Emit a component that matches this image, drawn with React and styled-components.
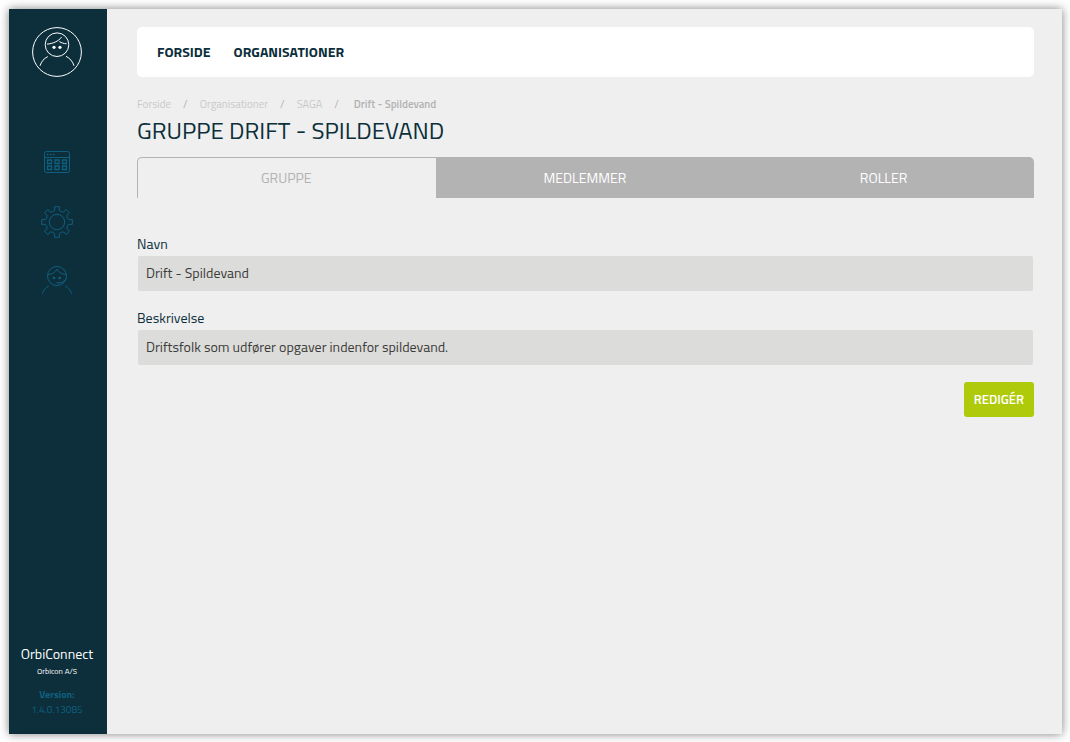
import React from "react"
import styled, { createGlobalStyle } from "styled-components"

const menuLinks = ["Forside", "Organisationer"]
const crumbs = ["Forside", "Organisationer", "SAGA"]
const tabs = ["Gruppe", "Medlemmer", "Roller"]

const gearPath = () => {
  const point = (radius, degrees) => {
    const angle = (degrees * Math.PI) / 180
    const x = 16 + radius * Math.cos(angle)
    const y = 16 + radius * Math.sin(angle)
    return `${x.toFixed(2)} ${y.toFixed(2)}`
  }
  let path = ""
  for (let a = 0; a < 360; a += 45) {
    path += `${a === 0 ? "M" : "L"}${point(12, a - 11)} L${point(15.5, a - 9)} `
    path += `L${point(15.5, a + 9)} L${point(12, a + 11)} `
    path += `Q${point(10.4, a + 22.5)} ${point(12, a + 34)} `
  }
  return path + "Z"
}

const AvatarIcon = () => (
  <Icon width="50" height="50" viewBox="0 0 50 50" aria-hidden="true">
    <circle cx="25" cy="25" r="24.4" />
    <circle cx="25" cy="17.7" r="11.8" />
    <path d="M15 17.2C20.5 16.6 26.5 14.5 29.6 10M27.3 14.6C29.5 15.8 31.5 16.6 34.6 16.8" />
    <path d="M8 38.8C9.3 34.6 11.9 31.4 15.8 29.6M34 29.3C37.9 31.2 40.7 34.5 42 38.8" />
    <Dot cx="22" cy="20.3" r="1.6" />
    <Dot cx="28" cy="20.3" r="1.6" />
  </Icon>
)

const CalendarIcon = () => (
  <Icon width="32" height="32" viewBox="0 0 32 32" aria-hidden="true">
    <rect x="3.5" y="5.5" width="25" height="21" rx="2" />
    <path d="M3.5 11.5H28.5" />
    <path d="M5.8 8.5H7.4M8.8 8.5H10.4M11.8 8.5H13.4" strokeWidth="1.6" />
    <path
      d="M6.5 14H10.5V17.5H6.5ZM14 14H18V17.5H14ZM21.5 14H25.5V17.5H21.5Z"
      strokeWidth="1.3"
    />
    <path
      d="M6.5 20H10.5V23.5H6.5ZM14 20H18V23.5H14ZM21.5 20H25.5V23.5H21.5Z"
      strokeWidth="1.3"
    />
  </Icon>
)

const GearIcon = () => (
  <Icon width="32" height="32" viewBox="0 0 32 32" aria-hidden="true">
    <circle cx="16" cy="16" r="7.7" />
    <path d={gearPath()} />
  </Icon>
)

const SupportIcon = () => (
  <Icon width="32" height="32" viewBox="0 0 32 32" aria-hidden="true">
    <circle cx="16" cy="10" r="9.5" />
    <path d="M7 8.6C11 8.2 14.5 6.4 16 3.2C17.5 6.4 21 8.2 25 8.6" />
    <path d="M25 13C23.2 15.7 20.5 16.8 17.5 16.8M15.5 16.8H18.5" />
    <path d="M1.5 27.5C2.4 24.4 4.4 21.6 7.6 20M24.4 20C27.6 21.6 29.6 24.4 30.5 27.5" />
    <Dot cx="13" cy="12" r="1.3" />
    <Dot cx="18.7" cy="12" r="1.3" />
  </Icon>
)

const App = () => {
  return (
    <>
      <GlobalStyle />
      <Page>
        <Sidebar>
          <Avatar href="#profil" aria-label="Profil">
            <AvatarIcon />
          </Avatar>
          <SideNav>
            <SideLink href="#kalender" aria-label="Kalender">
              <CalendarIcon />
            </SideLink>
            <SideLink href="#indstillinger" aria-label="Indstillinger">
              <GearIcon />
            </SideLink>
            <SideLink href="#support" aria-label="Support">
              <SupportIcon />
            </SideLink>
          </SideNav>
          <AppInfo>
            <AppName>OrbiConnect</AppName>
            <Company>Orbicon A/S</Company>
            <Version>
              <strong>Version:</strong>
              <span>1.4.0.13085</span>
            </Version>
          </AppInfo>
        </Sidebar>
        <Main>
          <TopBar>
            {menuLinks.map(text => (
              <MenuLink href={`#${text.toLowerCase()}`} key={text}>
                {text}
              </MenuLink>
            ))}
          </TopBar>
          <Breadcrumb>
            {crumbs.map(text => (
              <Crumb key={text}>
                <a href={`#${text.toLowerCase()}`}>{text}</a>
              </Crumb>
            ))}
            <CurrentCrumb>Drift - Spildevand</CurrentCrumb>
          </Breadcrumb>
          <Title>Gruppe Drift - Spildevand</Title>
          <TabList role="tablist">
            {tabs.map((text, index) => (
              <Tab
                type="button"
                role="tab"
                aria-selected={index === 0}
                $active={index === 0}
                key={text}
              >
                {text}
              </Tab>
            ))}
          </TabList>
          <Form>
            <Field>
              <Label htmlFor="navn">Navn</Label>
              <Input id="navn" readOnly value="Drift - Spildevand" />
            </Field>
            <Field>
              <Label htmlFor="beskrivelse">Beskrivelse</Label>
              <Input
                id="beskrivelse"
                readOnly
                value="Driftsfolk som udfører opgaver indenfor spildevand."
              />
            </Field>
            <EditButton type="button">Redigér</EditButton>
          </Form>
        </Main>
      </Page>
    </>
  )
}

const GlobalStyle = createGlobalStyle`
  :root {
    --dark: #0c2f3b;
    --blue: #0f6080;
    --grey: #b3b3b3;
    --light-grey: #c9c9c9;
    --background: #efefef;
    --green: #afca0b;
  }
  * {
    box-sizing: border-box;
  }
  body {
    margin: 0;
    padding: 9px 8px 8px 9px;
    background: #fff;
    color: var(--dark);
    font: 14px/20px "Titillium Web", Roboto, sans-serif;
  }
  a {
    color: inherit;
    text-decoration: none;
  }
  button, input {
    font: inherit;
  }
`
const Page = styled.div`
  display: flex;
  min-height: calc(100vh - 17px);
  background: var(--background);
  box-shadow: 0 0 9px rgba(0, 0, 0, 0.5);
`
const Sidebar = styled.aside`
  display: flex;
  flex-direction: column;
  align-items: center;
  flex: 0 0 98px;
  padding: 18px 2px 17px 0;
  background: var(--dark);
`
const Icon = styled.svg`
  display: block;
  fill: none;
  stroke: currentColor;
`
const Dot = styled.circle`
  fill: currentColor;
  stroke: none;
`
const Avatar = styled.a`
  color: #fff;
`
const SideNav = styled.nav`
  display: flex;
  flex-direction: column;
  gap: 28px;
  margin-top: 69px;
`
const SideLink = styled.a`
  color: var(--blue);
`
const AppInfo = styled.footer`
  display: flex;
  flex-direction: column;
  align-items: center;
  margin-top: auto;
  color: #fff;
`
const AppName = styled.span`
  font-size: 14px;
`
const Company = styled.span`
  font-size: 8px;
  line-height: 14px;
`
const Version = styled.div`
  display: flex;
  flex-direction: column;
  align-items: center;
  margin-top: 9px;
  font-size: 10px;
  line-height: 15px;
  color: var(--blue);
`
const Main = styled.main`
  flex: 1;
  min-width: 0;
  padding: 18px 28px 18px 30px;
`
const TopBar = styled.nav`
  display: flex;
  align-items: center;
  gap: 23px;
  height: 50px;
  padding: 0 20px;
  border-radius: 5px;
  background: #fff;
`
const MenuLink = styled.a`
  font-weight: bold;
  text-transform: uppercase;
`
const Breadcrumb = styled.ol`
  display: flex;
  margin: 17px 0 0;
  padding: 0;
  list-style: none;
  font-size: 11px;
  color: var(--light-grey);
`
const Crumb = styled.li`
  &::after {
    content: "/";
    margin: 0 12px;
    color: var(--grey);
  }
`
const CurrentCrumb = styled.li`
  padding-left: 3px;
  font-weight: 600;
  color: var(--grey);
`
const Title = styled.h1`
  margin: 0 0 11px;
  font-size: 24px;
  font-weight: normal;
  line-height: 32px;
  text-transform: uppercase;
`
const TabList = styled.div`
  display: flex;
`
const Tab = styled.button`
  flex: 1 1 100%;
  height: 41px;
  padding: 0 2px 0 0;
  border: 0 solid var(--grey);
  border-width: ${props => (props.$active ? "1px 0 0 1px" : "0")};
  background: ${props => (props.$active ? "transparent" : "var(--grey)")};
  color: ${props => (props.$active ? "var(--grey)" : "#fff")};
  text-transform: uppercase;
  cursor: pointer;
  &:first-child {
    border-top-left-radius: 5px;
  }
  &:last-child {
    border-top-right-radius: 5px;
  }
`
const Form = styled.form`
  display: flex;
  flex-direction: column;
  gap: 17px;
  margin-top: 36px;
`
const Field = styled.div`
  display: flex;
  flex-direction: column;
  gap: 2px;
`
const Label = styled.label`
  font-size: 14px;
`
const Input = styled.input`
  height: 35px;
  margin: 0 1px;
  padding: 0 8px 2px;
  border: 0;
  border-radius: 2px;
  background: #dcdcda;
  color: #3c3c3b;
`
const EditButton = styled.button`
  align-self: flex-end;
  height: 35px;
  padding: 0 10px 2px;
  border: 0;
  border-radius: 3px;
  background: var(--green);
  color: #fff;
  font-size: 13px;
  font-weight: 600;
  text-transform: uppercase;
  cursor: pointer;
`

export default App
